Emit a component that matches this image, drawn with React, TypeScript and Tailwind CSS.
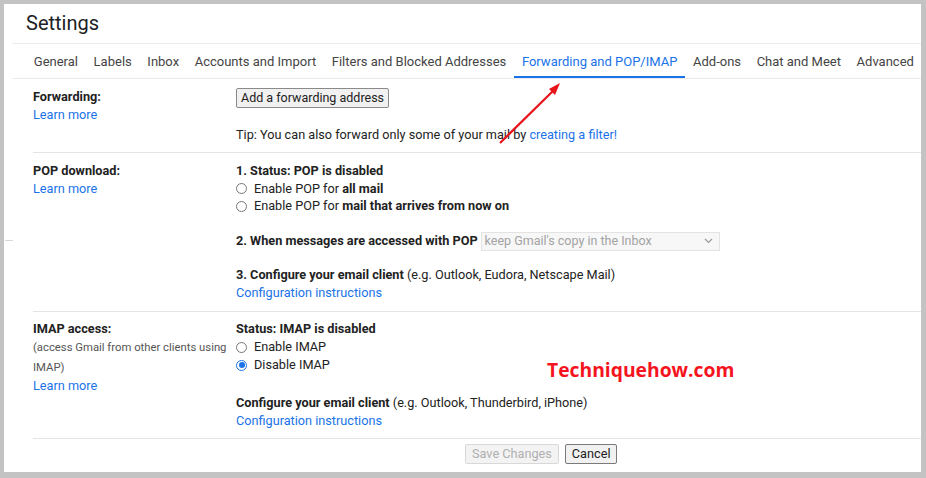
import React from 'react';

const tabs = ['General', 'Labels', 'Inbox', 'Accounts and Import', 'Filters and Blocked Addresses', 'Forwarding and POP/IMAP', 'Add-ons', 'Chat and Meet', 'Advanced'];

const Radio = ({ checked = false }: { checked?: boolean }) => (
    <span className={`inline-flex items-center justify-center w-[11px] h-[11px] rounded-full border ${checked ? 'border-[#1a73e8]' : 'border-[#767676]'} bg-white mr-[7px] shrink-0`}>
        {checked && <span className="w-[6px] h-[6px] rounded-full bg-[#1a73e8]" />}
    </span>
);

const Row = ({ label, children }: { label: React.ReactNode; children: React.ReactNode }) => (
    <div className="flex ml-[29px] border-b border-[#e4e4e4]">
        <div className="w-[203px] shrink-0">{label}</div>
        <div className="flex-1">{children}</div>
    </div>
);

export default function App() {
    return (
        <div className="w-[926px] h-[478px] bg-[#c3c3c3] pt-[4px] pl-[4px] pr-[5px] pb-[6px] overflow-hidden">
            <div className="relative w-full h-full bg-white text-[12.7px] leading-[18px] text-[#222]" style={{ fontFamily: 'Roboto, "Liberation Sans", sans-serif' }}>
                {/* Title */}
                <div className="h-[40px] ml-[8px] border-b border-[#ebebeb] pl-[14px] pt-[7px]">
                    <span className="text-[20px] leading-[24px] text-[#202124]">Settings</span>
                </div>

                {/* Tabs */}
                <div className="flex ml-[8px] pl-[14px] border-b border-[#ebebeb] h-[35px] items-stretch text-[13px]">
                    {tabs.map((t) => {
                        const active = t === 'Forwarding and POP/IMAP';
                        return (
                            <div key={t} className={`px-[7.8px] pt-[3px] flex items-center whitespace-nowrap border-b-2 ${active ? 'text-[#1a73e8] border-[#1a73e8]' : 'text-[#444] border-transparent'}`}>
                                {t}
                            </div>
                        );
                    })}
                </div>

                {/* Forwarding */}
                <Row
                    label={
                        <div className="pt-[9px]">
                            <div className="font-bold">Forwarding:</div>
                            <div className="text-[#1a73e8]">Learn more</div>
                        </div>
                    }
                >
                    <div className="pt-[9px] pb-[8px]">
                        <button className="h-[20px] px-[4px] border border-[#8a8a8a] bg-[#f1f1f1] rounded-[2px] text-[12.5px] leading-[16px] text-[#222]">
                            Add a forwarding address
                        </button>
                        <div className="mt-[18px]">
                            Tip: You can also forward only some of your mail by <span className="text-[#1a73e8]">creating a filter!</span>
                        </div>
                    </div>
                </Row>

                {/* POP */}
                <Row
                    label={
                        <div className="pt-[9px]">
                            <div className="font-bold">POP download:</div>
                            <div className="text-[#1a73e8]">Learn more</div>
                        </div>
                    }
                >
                    <div className="pt-[9px] pb-[9px]">
                        <div className="font-bold">1. Status: POP is disabled</div>
                        <div className="flex items-center h-[17.5px]"><Radio />Enable POP for&nbsp;<b>all mail</b></div>
                        <div className="flex items-center h-[17.5px]"><Radio />Enable POP for&nbsp;<b>mail that arrives from now on</b></div>
                        <div className="flex items-center mt-[16px] h-[20px]">
                            <b>2. When messages are accessed with POP</b>
                            <div className="ml-[3px] w-[239px] h-[19px] border border-[#e3e3e3] bg-[#f7f7f7] flex items-center justify-between pl-[3px] pr-[6px] text-[#a3a3a3] text-[12.5px]">
                                <span>keep Gmail's copy in the Inbox</span>
                                <svg width="9" height="6" viewBox="0 0 9 6" fill="none" stroke="#9a9a9a" strokeWidth="1.2"><path d="M1 1l3.5 3.5L8 1" /></svg>
                            </div>
                        </div>
                        <div className="mt-[15px]"><b>3. Configure your email client</b> (e.g. Outlook, Eudora, Netscape Mail)</div>
                        <div className="text-[#1a73e8]">Configuration instructions</div>
                    </div>
                </Row>

                {/* IMAP */}
                <Row
                    label={
                        <div className="pt-[8px]">
                            <div className="font-bold">IMAP access:</div>
                            <div className="text-[11.3px] leading-[19.5px] text-[#555]">(access Gmail from other clients using IMAP)</div>
                            <div className="text-[#1a73e8]">Learn more</div>
                        </div>
                    }
                >
                    <div className="pt-[8px] pb-[8px]">
                        <div className="font-bold">Status: IMAP is disabled</div>
                        <div className="flex items-center"><Radio />Enable IMAP</div>
                        <div className="flex items-center"><Radio checked />Disable IMAP</div>
                        <div className="mt-[20px]"><b>Configure your email client</b> (e.g. Outlook, Thunderbird, iPhone)</div>
                        <div className="text-[#1a73e8]">Configuration instructions</div>
                    </div>
                </Row>

                {/* Buttons */}
                <div className="flex gap-[6px] pl-[461px] pt-[5px]">
                    <button className="h-[20px] px-[6px] border border-[#d8d8d8] bg-[#f3f3f3] rounded-[2px] text-[#b0b0b0] text-[12.7px] leading-[16px]">Save Changes</button>
                    <button className="h-[20px] px-[6px] border border-[#7a7a7a] bg-[#f1f1f1] rounded-[2px] text-[#222] text-[12.7px] leading-[16px]">Cancel</button>
                </div>

                {/* stray mark */}
                <div className="absolute left-[1px] top-[236px] w-[8px] h-px bg-[#d8d8d8]" />

                {/* watermark */}
                <div className="absolute left-[543px] top-[352px] text-[19.3px] leading-[28px] font-bold text-[#f5141e]" style={{ fontFamily: '"Open Sans", sans-serif' }}>
                    Techniquehow.com
                </div>

                {/* arrow */}
                <svg className="absolute left-0 top-0 pointer-events-none" width="917" height="468" viewBox="0 0 917 468">
                    <line x1="496" y1="139" x2="550" y2="86" stroke="#e8141b" strokeWidth="2.2" />
                    <polygon points="556,79 545,85 551,91" fill="#e8141b" />
                </svg>
            </div>
        </div>
    );
}
